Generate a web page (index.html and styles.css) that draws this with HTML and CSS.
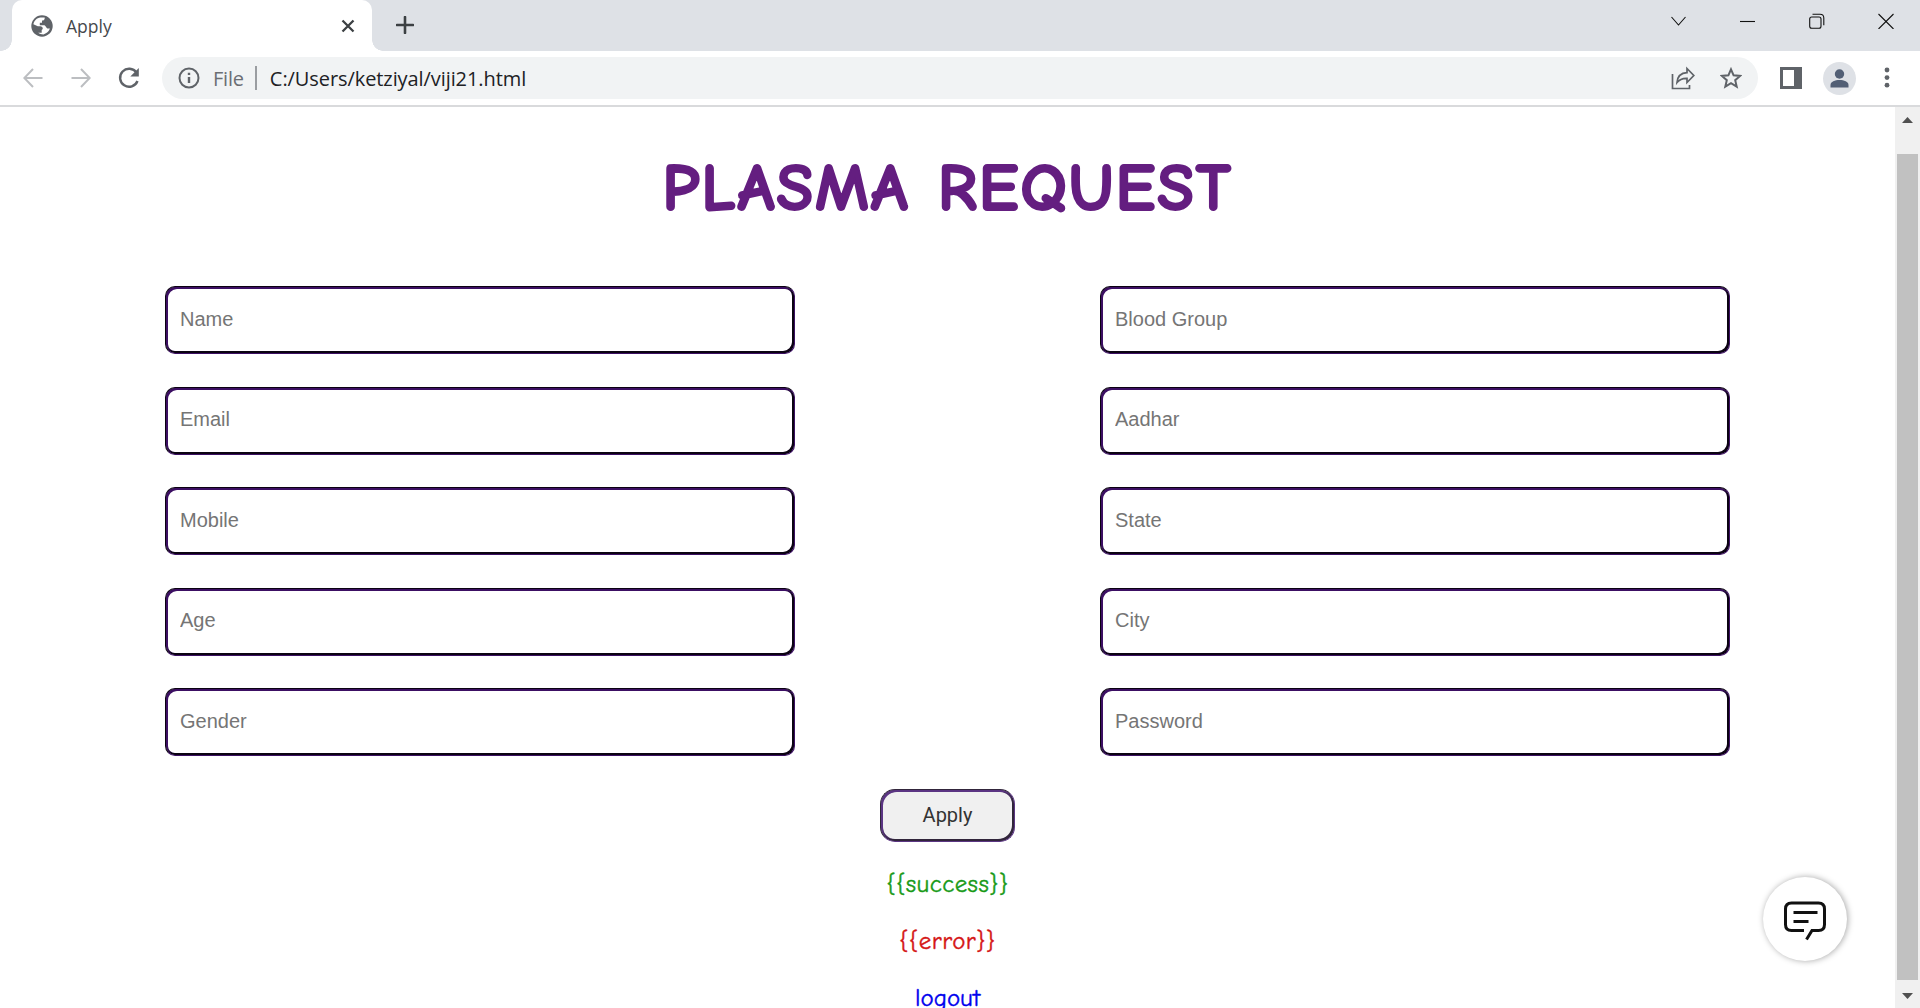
FILE: index.html
```html
<!DOCTYPE html>
<html lang="en">
<head>
<meta charset="utf-8">
<title>Apply</title>
<link rel="stylesheet" href="styles.css">
</head>
<body>
<div class="browser">
  <header class="tabstrip">
    <div class="tab">
      <svg class="globe" width="22" height="22" viewBox="0 0 22 22"><circle cx="11" cy="11" r="10.7" fill="#5f6368"/><path d="M2.4 9.3C3 5.500 5.800 2.800 9.500 2.400h4.200c.3 2.100-.8 3.100-2.700 3.200v2.200H8.800v2.400h4.500c1.700.4 1.800 3.300 3.700 3.300h1.900c-.8 2-2 3.500-3.600 4.500l-2.800 1.500c-2.200 0-3.800-.5-5.300-1.700h3.500v-2.700c2.200-1.400.8-3.700-1.200-3.900H6.800z" fill="#fff"/></svg>
      <span class="tab-title">Apply</span>
      <svg class="tab-close" width="14" height="14" viewBox="0 0 14 14"><path d="M1.500 1.500l11 11M12.500 1.500l-11 11" stroke="#3c4043" stroke-width="2.300"/></svg>
    </div>
    <svg class="new-tab" width="18" height="18" viewBox="0 0 18 18"><path d="M9 1v16M1 9h16" stroke="#3c4043" stroke-width="2.600" stroke-linecap="round"/></svg>
    <div class="window-controls">
      <svg width="16" height="16" viewBox="0 0 16 16"><path d="M.5 4l7 8 7-8"/></svg>
      <svg width="16" height="16" viewBox="0 0 16 16"><path d="M0 8.500h15"/></svg>
      <svg width="16" height="16" viewBox="0 0 16 16"><rect x=".7" y="4" width="11.300" height="11.300" rx="2"/><path d="M3.500 1.200H11q3.800 0 3.800 3.800v7.300"/></svg>
      <svg width="16" height="16" viewBox="0 0 16 16"><path d="M.5 1l15 15M15.500 1l-15 15"/></svg>
    </div>
  </header>
  <div class="toolbar">
    <svg class="nav" width="20" height="20" viewBox="0 0 20 20"><path d="M19.500 10H1.500M10 1L1.300 10l8.700 9" stroke="#bcbec1"/></svg>
    <svg class="nav" width="20" height="20" viewBox="0 0 20 20"><path d="M.5 10h18M10 1l8.700 9-8.700 9" stroke="#bcbec1"/></svg>
    <svg class="nav" width="22" height="22" viewBox="0 0 22 22"><path d="M18.500 5.600A9 9 0 1 0 19.500 14" stroke="#5f6368" stroke-width="2.400"/><path d="M20.800 1v8.500h-8.500z" fill="#5f6368"/></svg>
    <div class="omnibox">
      <svg width="22" height="22" viewBox="0 0 22 22" fill="none" stroke="#5f6368" stroke-width="2"><circle cx="11" cy="11" r="9.500"/><path d="M11 10v6M11 5.700v2.300" stroke-width="2.400"/></svg>
      <span class="scheme">File</span>
      <span class="divider"></span>
      <span class="url">C:/Users/ketziyal/viji21.html</span>
      <svg class="share" width="24" height="24" viewBox="0 0 24 24" fill="none" stroke="#5f6368" stroke-width="1.700"><path d="M1.500 8v14.500h17V19M6 16.500c.5-6 4-9.500 10-9.800V2.500l6.800 7-6.800 7v-4.200c-4.500-.2-7.500 1-10 4.200z"/></svg>
      <svg width="22" height="22" viewBox="0 0 22 22" fill="none" stroke="#5f6368" stroke-width="2"><path d="M11 2.300l2.600 6 6.500.6-4.900 4.300 1.500 6.400-5.700-3.400-5.700 3.400 1.500-6.400L1.900 8.900l6.500-.6z"/></svg>
    </div>
    <svg class="panel" width="22" height="22" viewBox="0 0 22 22"><path d="M0 0h22v22H0z" fill="#5f6368"/><path d="M3 3h11v16H3z" fill="#fff"/></svg>
    <svg class="avatar" width="33" height="33" viewBox="0 0 33 33"><circle cx="16.500" cy="16.500" r="16.500" fill="#dee1e6"/><circle cx="16.500" cy="12" r="4.700" fill="#525f75"/><path d="M7.500 25.500V23c0-3.400 4.500-5 9-5s9 1.600 9 5v2.500z" fill="#525f75"/></svg>
    <svg class="menu" width="6" height="22" viewBox="0 0 6 22" fill="#5f6368"><circle cx="3" cy="3" r="2.400"/><circle cx="3" cy="10.600" r="2.400"/><circle cx="3" cy="18.200" r="2.400"/></svg>
  </div>
  <div class="viewport">
    <main class="page">
      <h1><span>PLASMA</span><span>REQUEST</span></h1>
      <form class="fields">
        <input placeholder="Name"><input placeholder="Blood Group">
        <input placeholder="Email"><input placeholder="Aadhar">
        <input placeholder="Mobile"><input placeholder="State">
        <input placeholder="Age"><input placeholder="City">
        <input placeholder="Gender"><input placeholder="Password">
      </form>
      <button class="apply" type="button">Apply</button>
      <p class="message success">{{success}}</p>
      <p class="message error">{{error}}</p>
      <a class="message logout">logout</a>
    </main>
    <div class="scrollbar">
      <svg width="11" height="6" viewBox="0 0 11 6"><path d="M0 6L5.500 0 11 6z" fill="#505050"/></svg>
      <div class="thumb"></div>
      <svg width="11" height="6" viewBox="0 0 11 6"><path d="M0 0h11L5.500 6z" fill="#505050"/></svg>
    </div>
    <div class="chat">
      <svg width="44" height="42" viewBox="0 0 44 42" fill="none" stroke="#111" stroke-width="3"><path d="M21 30.500H8.500q-6 0-6-6V9q0-6 6-6h27q6 0 6 6v15.500q0 6-6 6H29l-5.500 9M10.500 12.500h24M10.500 21.500h15"/></svg>
    </div>
  </div>
</div>
</body>
</html>
```
FILE: styles.css
```css
* { box-sizing: border-box; }
body { margin: 0; background: #fff; }
svg { display: block; flex: none; }
.browser {
  display: flex;
  flex-direction: column;
  height: 1008px;
  overflow: hidden;
  font-family: "Open Sans", "Noto Sans", sans-serif;
}

.tabstrip {
  display: flex;
  flex: none;
  height: 51px;
  padding-left: 12px;
  background: #dee1e6;
}
.tab {
  position: relative;
  display: flex;
  align-items: center;
  width: 360px;
  padding: 0 17px 0 19px;
  border-radius: 10px 10px 0 0;
  background: #fff;
}
.tab::before,
.tab::after {
  content: "";
  position: absolute;
  bottom: 0;
  width: 11px;
  height: 11px;
}
.tab::before { left: -11px; background: radial-gradient(circle at 0 0, transparent 10.5px, #fff 11px); }
.tab::after { right: -11px; background: radial-gradient(circle at 100% 0, transparent 10.5px, #fff 11px); }
.tab-title { margin-left: 13px; font-size: 17.5px; color: #45484c; }
.tab-close { margin-left: auto; }
.new-tab { margin: 16px 0 0 24px; }
.window-controls {
  display: flex;
  gap: 53px;
  margin: 13px 26px 0 auto;
}
.window-controls svg { fill: none; stroke: #111; stroke-width: 1.1; }

.toolbar {
  display: flex;
  flex: none;
  align-items: center;
  height: 56px;
  padding: 0 30px 0 23px;
  border-bottom: 2px solid #d9dadc;
}
.nav { margin-right: 28px; fill: none; stroke-width: 2; }
.nav:nth-child(2) { margin-right: 27px; }
.nav:nth-child(3) { margin-right: 22px; }
.omnibox {
  display: flex;
  align-items: center;
  flex: 1;
  height: 42px;
  padding: 0 16px 0 16px;
  border-radius: 21px;
  background: #f1f3f4;
  font-size: 20px;
  white-space: nowrap;
}
.scheme { margin-left: 13px; color: #6b6e73; letter-spacing: -.2px; }
.divider { width: 2px; height: 24px; margin: 0 13px 0 11px; background: #9a9da1; }
.url { color: #202124; letter-spacing: -.08px; }
.share { margin: 0 25px 0 auto; }
.panel { margin-left: 22px; }
.avatar { margin-left: 21px; }
.menu { margin-left: 28px; }

.viewport {
  position: relative;
  display: flex;
  flex: 1;
  min-height: 0;
}
.page {
  display: flex;
  flex: 1;
  flex-direction: column;
  align-items: center;
  min-width: 0;
  overflow: hidden;
  font-family: "Comic Sans MS", "Comic Neue", Lato, sans-serif;
}
h1 {
  display: flex;
  flex: none;
  gap: 28px;
  margin: 43px 0 0;
  height: 136px;
  font-size: 67px;
  font-weight: 700;
  line-height: 77px;
  letter-spacing: 1.9px;
  color: #641e80;
  -webkit-text-stroke: 2px #641e80;
}
.fields {
  display: grid;
  flex: none;
  grid-template-columns: 630px 630px;
  grid-auto-rows: 68px;
  column-gap: 305px;
  row-gap: 32.5px;
}
input {
  min-width: 0;
  padding: 0 14px 2px;
  border: 1px solid;
  border-color: #0b0212 #3c0f63 #3c0f63 #0b0212;
  border-radius: 10px;
  background: #fff;
  box-shadow: inset 2px 2px #3c0f63, inset -2px -2px #0b0212, inset 0 0 0 2px #200838;
  font: 20px "Liberation Sans", Arial, sans-serif;
}
input::placeholder { color: #757575; opacity: 1; }
.apply {
  flex: none;
  width: 135px;
  height: 53px;
  margin-top: 33px;
  padding: 0 0 2px;
  border: 1px solid;
  border-color: #31253b #5b3583 #5b3583 #31253b;
  border-radius: 15px;
  background: #f0f0f0;
  box-shadow: inset 2px 2px #5b3583, inset -2px -2px #31253b, inset 0 0 0 2px #462d5f;
  font: 20px Roboto, "Open Sans", sans-serif;
  color: #333;
}
.message {
  flex: none;
  margin: 0;
  height: 57px;
  font-size: 25px;
  line-height: 32px;
  -webkit-text-stroke: .4px;
}
.success { margin-top: 26px; color: #189a18; letter-spacing: .4px; }
.error { color: #d51515; letter-spacing: .5px; }
.logout { color: #0000ee; }

.scrollbar {
  display: flex;
  flex: none;
  flex-direction: column;
  align-items: center;
  width: 25px;
  padding: 10px 0 9px;
  background: #f0f0f0;
}
.thumb {
  flex: 1;
  width: 21px;
  margin: 31px 0 13px;
  background: #c1c1c1;
}
.chat {
  position: absolute;
  right: 73px;
  bottom: 47px;
  display: flex;
  justify-content: center;
  width: 84px;
  height: 84px;
  padding-top: 23px;
  border-radius: 50%;
  background: #fff;
  box-shadow: 1px 0 6px rgba(0, 0, 0, .35);
}
```
